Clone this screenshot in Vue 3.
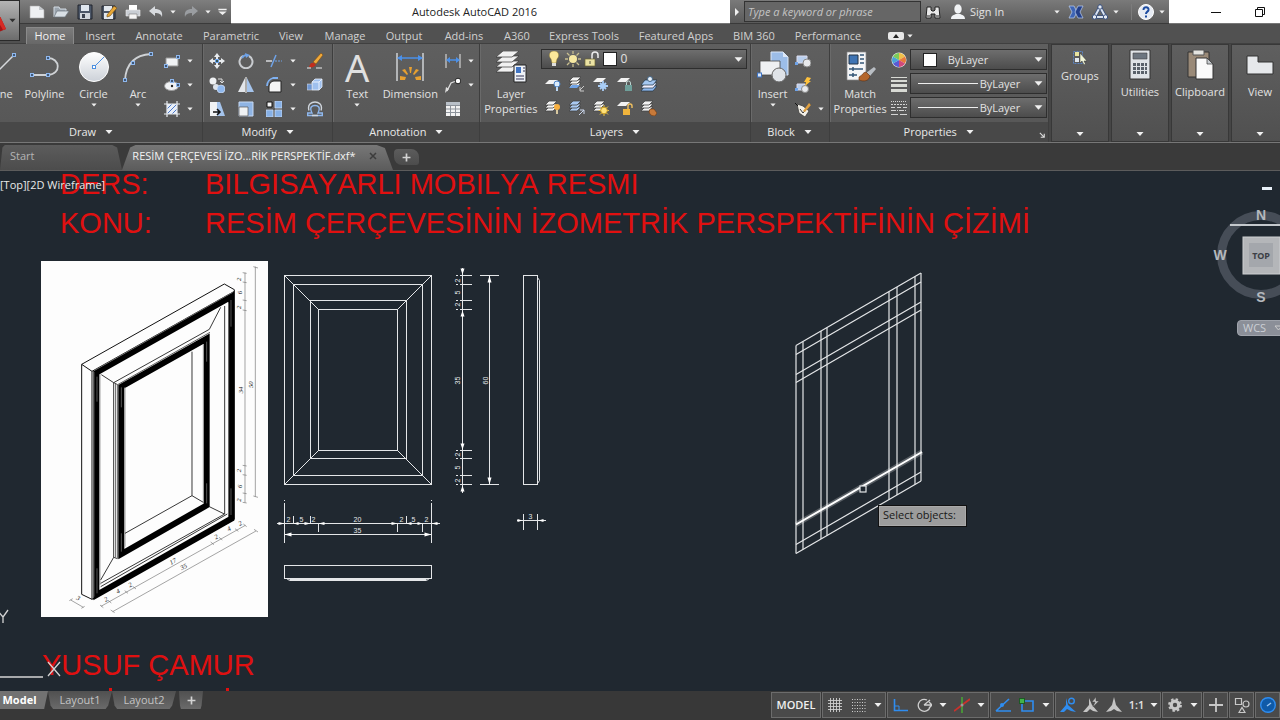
<script setup>
import { h } from 'vue'

const P = 'fill="none" stroke-linecap="round"'
const node = (x, y) => `<rect x="${x - 1.5}" y="${y - 1.5}" width="3" height="3" fill="#3f5878" stroke="#8fb8ee"/>`
const stack = (c = '#f2f2f2') =>
  [9, 6, 3].map((y) => `<path d="M4 ${y - 2}h8l-4 4h-8z" fill="${c}" stroke="#444" stroke-width=".8"/>`).join('')

const icons = {
  // quick access
  new: '<path d="M1 2h9l5 4v8H1z" fill="#eef0f2" stroke="#aaa" stroke-width=".6"/><path d="M10 2v4h5" fill="#c4c8cc"/>',
  open: '<path d="M1 13V3h5l1 2h6v2" fill="#9aa4ae" stroke="#d3dbe3"/><path d="M1 13l3-6h12l-4 6z" fill="#d9e0e6" stroke="#6b747d" stroke-width=".7"/>',
  save: '<path d="M1 1h14v14H1z" fill="#4c5768" stroke="#20252c"/><path d="M4 1h8v6H4z" fill="#dfe6ee"/><path d="M3 9h10v6H3z" fill="#d0d5db"/><path d="M5 10h3v4H5z" fill="#3c4350"/>',
  saveas: '<path d="M1 2h13v13H1z" fill="#4c5768" stroke="#20252c"/><path d="M3 2h8v5H3zM3 9h9v6H3z" fill="#e3e8ed"/><path d="M6 11l7-9 3 2-7 8-3 1z" fill="#e8a838" stroke="#6b4a14" stroke-width=".6"/>',
  print: '<path d="M4 1h8v5H4z" fill="#fff"/><path d="M1 6h14v6H1z" fill="#c9ced4" stroke="#eee" stroke-width=".6"/><path d="M4 10h8v5H4z" fill="#f5f5f5" stroke="#777" stroke-width=".6"/>',
  undo: '<path d="M1 7l6-5v3c5 0 8 2 7 8-1-3-3-4-7-4v3z" fill="#d7dade"/>',
  redo: '<path d="M15 7L9 2v3c-5 0-8 2-7 8 1-3 3-4 7-4v3z" fill="#9a9da1"/>',
  more: '<path d="M2 4h12v2H2zM2 8h12l-6 5z" fill="#f0f0f0"/>',
  down: '<path d="M1 4h14l-7 8z" fill="#f0f0f0"/>',
  right: '<path d="M4 0l8 8-8 8z" fill="#f0f0f0"/>',
  // info bar
  find: '<path d="M2 3h4v3l1 1h2l1-1V3h4l1 11h-5v-4H6v4H1z" fill="#e8e8e8" stroke="#222"/><path d="M2 12h3M11 12h3" stroke="#222"/>',
  user: '<ellipse cx="8" cy="5" rx="4" ry="5" fill="#f1f3f5" stroke="#555" stroke-width=".5"/><path d="M1 15c0-4 3-4 5-5h4c2 1 5 1 5 5z" fill="#f1f3f5"/>',
  exchange: '<path d="M1 2h5l3 6-3 6H1l3-6z" fill="#3e64b4" stroke="#bcd0f2" stroke-width=".7"/><path d="M15 2h-5L7 8l3 6h5l-3-6z" fill="#24408a" stroke="#bcd0f2" stroke-width=".7"/>',
  a360: '<path d="M8 3L2.500 13h11z" fill="none" stroke="#39507c" stroke-width="3.600"/><path d="M8 3L2.500 13h11z" fill="none" stroke="#d9e2f0" stroke-width="2"/><circle cx="8" cy="3" r="2.200" fill="#e7ecf4" stroke="#39507c"/><circle cx="2.500" cy="13" r="2.200" fill="#e7ecf4" stroke="#39507c"/><circle cx="13.500" cy="13" r="2.200" fill="#e7ecf4" stroke="#39507c"/>',
  help: '<circle cx="8" cy="8" r="7.500" fill="#e6ebf3" stroke="#fff"/><path d="M5.500 6c0-4 5.500-3.500 5 0-.3 1.800-2.500 1.600-2.500 4" fill="none" stroke="#1c4ba0" stroke-width="2"/><path d="M7 11.500h2v2H7z" fill="#1c4ba0"/>',
  min: '<path d="M3 8.500h10" stroke="#111"/>',
  restore: '<path d="M3.500 5.500h7v7h-7zM5.500 5V3.500h7v7H11" fill="none" stroke="#111"/>',
  logo: '<path d="M0 9L4 7l8 17-12 5z" fill="#a51414"/><path d="M0 9l4-2 8 17-3 1z" fill="#d62a24"/>',
  // draw
  line: `<path d="M4 28L28 4" ${P} stroke="#d6d9dc" stroke-width="1.500"/>${node(28, 4)}${node(4, 28)}`,
  polyline: `<path d="M3 24h16c14-1 12-17 0-17" ${P} stroke="#cfd2d5" stroke-width="1.800"/>${node(3, 24)}${node(19, 24)}${node(19, 7)}`,
  circle: `<defs><linearGradient id="cg" x2="0" y2="1"><stop stop-color="#fff"/><stop offset="1" stop-color="#ccd1d8"/></linearGradient></defs><circle cx="16" cy="16" r="14.500" fill="url(#cg)" stroke="#fff"/><path d="M16 16L26 6" stroke="#4b8fe0"/><rect x="14.500" y="14.500" width="3" height="3" fill="#fff" stroke="#4b8fe0"/>`,
  arc: `<path d="M3 29C4 14 12 4 29 3" ${P} stroke="#cfd2d5" stroke-width="1.800"/>${node(3, 29)}${node(11, 12)}${node(29, 3)}`,
  rect: `<path d="M2 5h12v8H2z" fill="#f0f2f4" stroke="#999"/>${node(2, 13)}${node(14, 4)}`,
  ellipse: `<ellipse cx="7.500" cy="9" rx="7" ry="4.500" fill="#f0f2f4" stroke="#999"/><circle cx="8" cy="9" r="1.200" fill="#222"/>${node(8, 4)}${node(14, 8)}`,
  hatch: '<path d="M3 3h10v10H3z" fill="#e8eef8"/><path d="M3 8l5-5M3 13L13 3M8 13l5-5" stroke="#4a78c8"/><path d="M3 0v16M13 0v16M0 3h16M0 13h16" stroke="#e8ecf0" stroke-width="1.200"/>',
  // modify
  move: '<path d="M8 0l3 4H9v3h3V5l4 3-4 3V9H9v3h2l-3 4-3-4h2V9H4v2L0 8l4-3v2h3V4H5z" fill="#e8ebee"/><rect x="6.500" y="6.500" width="3" height="3" fill="#355" stroke="#6fa3e8"/>',
  rotate: '<path d="M5 3a6.500 6.500 0 1 0 6 0" fill="none" stroke="#c9ccd0" stroke-width="2"/><path d="M4 5a6 6 0 0 1 4-3" fill="none" stroke="#6fa3e8" stroke-width="2"/><path d="M7 0l5 2-4 3z" fill="#6fa3e8"/>',
  trim: '<path d="M0 8h6" stroke="#d8dade" stroke-width="1.500"/><path d="M9 8h7" stroke="#6fa3e8" stroke-dasharray="2 1"/><path d="M5 14L10 2" stroke="#6fa3e8" stroke-width="1.500"/>',
  erase: '<path d="M6 9l8-9 2 2-7 9z" fill="#f0a93a" stroke="#7c4c12" stroke-width=".6"/><path d="M2 14c1-4 3-5 5-4l2 2c-2 2-4 3-7 2z" fill="#c22e1c"/><path d="M0 15h4M9 15h6" stroke="#eee"/>',
  copy: '<circle cx="4" cy="4" r="3.500" fill="#eef0f2"/><circle cx="7" cy="10" r="3" fill="#dde3ea"/><circle cx="12" cy="12" r="4" fill="#8fb8ee" stroke="#dde8f8" stroke-width=".6"/><path d="M9 2h4v3M11 4l2 2 2-2" fill="none" stroke="#ddd"/>',
  mirror: '<path d="M7 1v14H0z" fill="#e3e6ea"/><path d="M9 1v14h7z" fill="#a5c4ec"/><path d="M8 0v16" stroke="#fff"/>',
  fillet: '<path d="M3 15V10c0-3 2-6 5-6h7v11z" fill="#f4f4f4" stroke="#222"/><path d="M1 9c0-4 3-7 6-8h5" fill="none" stroke="#7fb0f0" stroke-width="1.800"/>',
  explode: '<path d="M5 5l3-3h7v8l-3 3H5z" fill="#9fc0ee" stroke="#e8f0fc" stroke-width=".8"/><path d="M5 5h7v8M12 5l3-3" fill="none" stroke="#e8f0fc"/><path d="M0 7h5v6H0z" fill="#6f98d4" stroke="#ddd" stroke-width=".6"/>',
  stretch: '<path d="M1 1h7v14H1z" fill="#f0f2f4"/><path d="M8 1h3l5 14H8z" fill="#a5c4ec"/><path d="M4 11h6M8 8l3 3-3 3" fill="none" stroke="#111" stroke-width="1.500"/>',
  scale: '<path d="M1 1h14v14H1z" fill="#8fb4e4" stroke="#c8daf4"/><path d="M1 6h9v9H1z" fill="#f0f2f4" stroke="#555" stroke-width=".7"/>',
  array: '<path d="M1 1h5v5H1z" fill="#f6f6f6" stroke="#111"/><path d="M9 0h7v7H9zM0 9h7v7H0zM9 9h7v7H9z" fill="#86b0e6" stroke="#c8daf4" stroke-width=".8"/>',
  offset: '<path d="M.700 14.500V12H5C2 6 5 4.500 8 4.500S14 6 11 12h4.300v2.500z" fill="none" stroke="#8fb8ee" stroke-width="1.400"/><path d="M2 9.500C0 3 5 1 8 1s8 2 6 8.500M5 14.500h6" fill="none" stroke="#d0d6dd" stroke-width="1.400"/>',
  // annotation
  dimension: '<path d="M3 2v28M29 2v28" stroke="#cfd2d5" stroke-width="1.500"/><path d="M4 7h24" stroke="#4b90e8" stroke-width="1.500"/><path d="M3 7l5-3v6zM29 7l-5-3v6z" fill="#4b90e8"/><g fill="#e8a030"><path d="M15 16h3l-1 6h-1zM8 19l3-1 3 5-1 1zM25 19l-3-1-3 5 1 1zM6 25l6 1-1 3H6zM27 25l-6 1 1 3h5z"/></g>',
  linear: '<path d="M1 1v14M15 1v14" stroke="#e8e8e8"/><path d="M2 7h12" stroke="#4b90e8" stroke-width="1.500"/><path d="M1 7l4-3v6zM15 7l-4-3v6z" fill="#4b90e8"/>',
  leader: '<path d="M2 14L6 6l5-2" fill="none" stroke="#ddd" stroke-width="1.300"/><path d="M0 16l1-6 3 2z" fill="#ddd"/><circle cx="13" cy="4" r="2.800" fill="#fff" stroke="#222"/>',
  table: '<path d="M1 1h14v14H1z" fill="#f2f2f2"/><path d="M1 4.500h14M1 8h14M1 11.500h14M5.500 4v11M10.500 4v11" stroke="#8c929a"/><path d="M1 1h14v3H1z" fill="#b9c0c8"/>',
  // layers
  layerprops: '<g fill="#f2f2f2" stroke="#383838" stroke-width=".7"><path d="M8 15h16l-7 6H1z"/><path d="M8 10h16l-7 6H1z"/><path d="M8 5h16l-7 6H1z"/><path d="M8 0h16l-7 6H1z"/></g><path d="M19 14h12v17H19z" fill="#eef2f8" stroke="#222"/><path d="M21 16h5v6h-5z" fill="#3f74c4"/><path d="M28 17h2M28 20h2M21 25h8M21 28h8" stroke="#335"/>',
  bulb: '<path d="M8 0C3 0 2 5 5 8l1 4h4l1-4c3-3 2-8-3-8z" fill="#fbe79a" stroke="#8f7a30" stroke-width=".5"/><path d="M6 12h4v3H6z" fill="#ddd"/>',
  sun: '<circle cx="8" cy="8" r="4" fill="#f7e9a2"/><path d="M8 0v3M8 13v3M0 8h3M13 8h3M2 2l2.500 2.500M11.500 11.500L14 14M14 2l-2.500 2.500M4.500 11.500L2 14" stroke="#c9bf90" stroke-width="1.300"/>',
  unlock: '<path d="M8 8V4a3 3 0 0 1 6 0v3" fill="none" stroke="#eee" stroke-width="1.500"/><path d="M1 8h10v7H1z" fill="#ece3a4" stroke="#6d6430" stroke-width=".7"/><path d="M6 10v3" stroke="#554"/>',
  l1: '<path d="M4 4h9l-4 4H0z" fill="#f2f2f2"/><circle cx="12" cy="8" r="3" fill="#dcecfb" stroke="#4b84c8"/><path d="M12 11v4" stroke="#bcd8f4" stroke-width="2"/>',
  l2: stack() + '<path d="M3 9h8l-3 3H0z" fill="#6fa3e8"/><path d="M15 10l-4 4M11 11v4h4" stroke="#ccc" fill="none"/>',
  l3: '<path d="M4 2h9l-4 4H0z" fill="#f2f2f2"/><path d="M10 5v10M5 10h10M7 7l6 6M13 7l-6 6" stroke="#a9cdf6" stroke-width="1.800"/>',
  l4: '<path d="M4 2h9l-4 4H0z" fill="#f2f2f2"/><path d="M8 9h7v6H8z" fill="#6f9f9a"/><path d="M9.500 9V7a2 2 0 0 1 4 0v2" fill="none" stroke="#bcd4d0"/>',
  l5: '<g stroke="#234" stroke-width=".7"><path d="M4 10h12l-4 5H0z" fill="#8fb8ee"/><path d="M4 7h12l-4 5H0z" fill="#eef"/><path d="M4 4h12l-4 5H0z" fill="#a5c8f2"/></g><circle cx="9" cy="3" r="2.500" fill="#e8f2fc" stroke="#468"/>',
  l6: stack() + '<circle cx="12" cy="7" r="3" fill="#f8b040"/><path d="M12 10v4" stroke="#d8c8a0" stroke-width="2"/>',
  l7: stack('#a9c8f0') + '<path d="M10 15l5-5M11 10h4v4" stroke="#ccd8ee" fill="none"/>',
  l8: stack() + '<path d="M11 5v11M5.500 10.500h11M7 6.500l8 8M15 6.500l-8 8" stroke="#e8c34a"/><circle cx="11" cy="10.500" r="3.300" fill="#ffe27a" stroke="#c89a20"/>',
  l9: '<path d="M4 2h9l-4 4H0z" fill="#f2f2f2"/><path d="M6 9h7v6H6z" fill="#f0b43c"/><path d="M11 9V6a2 2 0 0 1 4 0v2" fill="none" stroke="#f0c060" stroke-width="1.400"/>',
  l10: stack() + '<path d="M9 9h4l3 4-2 3c-3 0-5-1-6-4z" fill="#c87a3a" stroke="#6d3a14" stroke-width=".6"/>',
  // block
  insert: '<path d="M14 1h12l5 5v18H14z" fill="#9cbde8" stroke="#dce8f8"/><path d="M26 1v5h5" fill="#dce8f8"/><path d="M3 10h20v14H3z" fill="#eef0f3" stroke="#444" stroke-width=".8"/><circle cx="22" cy="24" r="7" fill="#dfe3e8" stroke="#666"/><rect x="0.500" y="22" width="4" height="4" fill="#dce8f8" stroke="#3f74c4"/>',
  b1: '<path d="M2 3h10v7H2z" fill="#b9cfee" stroke="#dde"/><circle cx="12" cy="10" r="4" fill="#e8eaed" stroke="#888"/><path d="M0 9h3v3H0z" fill="#6fa3e8"/>',
  b2: '<path d="M2 7h8v6H2z" fill="#b9cfee" stroke="#dde"/><circle cx="10" cy="12" r="3.500" fill="#e8eaed" stroke="#888"/><path d="M12 0l4 1-2 3h2l-6 5 1-4H9z" fill="#ffc23c"/><path d="M0 11h3v3H0z" fill="#6fa3e8"/>',
  b3: '<path d="M2 3l6 2 6 5-4 6-6-4z" fill="#f3f0e8" stroke="#333" stroke-width=".7"/><path d="M5 8l3 4 8-9" fill="none" stroke="#333"/><path d="M8 10l6-8 2 2-6 7z" fill="#dfa040"/><path d="M0 2l3 3" stroke="#111"/>',
  // properties
  match: '<path d="M3 1h19v28H3z" fill="#f4f5f7" stroke="#888" stroke-width=".7"/><path d="M5 4h9v9H5z" fill="#3f74b4" stroke="#234"/><path d="M16 4h4M16 8h4M16 12h4M5 18h14M5 24h8M9 16v4M9 22v4" stroke="#357" stroke-width="1.500"/><path d="M22 22l8-6 2 2-6 7z" fill="#b9bec4"/><path d="M15 26c3-1 4-5 7-5l4 4c-1 5-6 6-11 4z" fill="#b4662c" stroke="#5b2d10" stroke-width=".6"/>',
  wheel: '<circle cx="8" cy="8" r="7.500" fill="#eee"/><path d="M8 8V1a7 7 0 0 1 6 3.500z" fill="#f0c04a"/><path d="M8 8l6-3.500a7 7 0 0 1 0 7z" fill="#e87a3a"/><path d="M8 8l6 3.500A7 7 0 0 1 8 15z" fill="#d04a7a"/><path d="M8 8v7a7 7 0 0 1-6-3.500z" fill="#5a5ad4"/><path d="M8 8l-6 3.500a7 7 0 0 1 0-7z" fill="#4aa4d8"/><path d="M8 8L2 4.500A7 7 0 0 1 8 1z" fill="#7ccb5a"/>',
  weight: '<path d="M0 1h16v1H0zM0 4h16v2H0zM0 8h16v3H0zM0 13h16v3H0z" fill="#d8dad4"/>',
  ltype: '<g stroke="#d4d4d4"><path d="M0 1.500h16" stroke-dasharray="1 1"/><path d="M0 4.500h16" stroke-dasharray="2 1"/><path d="M0 7.500h16" stroke-dasharray="4 2"/><path d="M0 10.500h16" stroke-dasharray="5 1 1 1"/><path d="M0 14.500h16" stroke-dasharray="7 2"/></g>',
  launcher: '<path d="M2 2l9 9M12 4v8H4" stroke="#ddd" stroke-width="2.500" fill="none"/>',
  // collapsed panels
  group: '<path d="M1.500 2.500h9v12h-9z" fill="none" stroke="#5b84c4" stroke-dasharray="2 1"/><path d="M3 3h4v4H3z" fill="#e8e4a0"/><path d="M3 9h4v4H3z" fill="#dfe6ee"/><path d="M8 4v10l2-2 2 4 1.500-1-1.500-3h3z" fill="#f2f6d8" stroke="#333" stroke-width=".5"/>',
  calc: '<path d="M6 1h20v29H6z" fill="#dfe3e7" stroke="#333"/><path d="M9 4h14v6H9z" fill="#6d7680" stroke="#444" stroke-width=".6"/><g fill="#59616a"><path d="M9 14h3v3H9zM13 14h3v3h-3zM17 14h3v3h-3zM21 14h2v3h-2zM9 18h3v3H9zM13 18h3v3h-3zM17 18h3v3h-3zM21 18h2v3h-2zM9 22h3v3H9zM13 22h3v3h-3zM17 22h3v3h-3zM21 22h2v3h-2z"/></g>',
  clip: '<path d="M4 3h21v25H4z" fill="#9a8a78" stroke="#333"/><path d="M9 1h11v5H9z" fill="#e4e4e0" stroke="#555"/><path d="M12 9h11l6 6v15H12z" fill="#fafafa" stroke="#333"/><path d="M23 9v6h6z" fill="#c8ccd0" stroke="#333" stroke-width=".7"/>',
  view: '<path d="M3 7h11v6h15v12H3z" fill="#e6e8eb" stroke="#333"/>',
  pill: '<rect x="0" y="4" width="16" height="8" rx="2" fill="#e8e8e8"/><path d="M5 10h6L8 6z" fill="#222"/>',
  plus: '<path d="M8 1v14M1 8h14" stroke="#d4d4d4" stroke-width="3"/>',
  close: '<path d="M2 2l12 12M14 2L2 14" stroke="#3c3c3c" stroke-width="3"/>',
  // status bar
  grid: '<path d="M3.500 1v14M6.500 1v14M9.500 1v14M12.500 1v14M1 3.500h14M1 6.500h14M1 9.500h14M1 12.500h14" stroke="#cfcfcf" stroke-width=".9"/>',
  snap: '<path d="M1 2.500h15M1 5.500h15M1 8.500h15M1 11.500h15M1 14.500h15" stroke="#cfcfcf" stroke-dasharray="1 1.500"/>',
  ortho: '<path d="M2.500 2v11.500H16" fill="none" stroke="#2f8df0" stroke-width="1.600"/><path d="M3 9h4v4" fill="none" stroke="#2f8df0"/>',
  polar: '<path d="M14 10a6 6 0 1 1-3-7M8 8h8M8 8l6-5M13 5l3 3-3 3" fill="none" stroke="#cfcfcf" stroke-width="1.300"/>',
  iso: '<path d="M8 0v16" stroke="#4a9a38" stroke-width="1.800"/><path d="M0 14L16 2" stroke="#c8322c" stroke-width="1.800"/><circle cx="8" cy="8" r="1.500" fill="#999"/>',
  otrack: '<path d="M1 14L14 2M1 14h15" fill="none" stroke="#2f8df0" stroke-width="1.700"/><circle cx="7" cy="8" r="2" fill="#2f8df0"/>',
  osnap: '<path d="M3 4h11v10H3z" fill="none" stroke="#2f8df0" stroke-width="1.600"/><path d="M0 1h6v6H0z" fill="#1c5a24"/><path d="M1 2h4v4H1z" fill="#43b24a"/>',
  anno1: '<path d="M6 1l2 7 8 7-5-1-4-2-3 3-4 0 6-7z" fill="#2f8df0"/><circle cx="11.500" cy="4" r="2.800" fill="none" stroke="#2f8df0" stroke-width="1.400"/>',
  anno2: '<path d="M6 1l3 7 6 7-5-1-3-2-3 3H0l6-7z" fill="#c4c4c4"/><path d="M13 0l-4 5h3l-2 5 6-6h-3z" fill="#c4c4c4" stroke="#4a4a4a" stroke-width=".5"/>',
  anno3: '<path d="M8 0l2 8 6 7-5-1-3-2-3 2-5 1 6-7z" fill="#c4c4c4"/>',
  gear: '<circle cx="8" cy="8" r="3.800" fill="none" stroke="#c8c8c8" stroke-width="3.200"/><circle cx="8" cy="8" r="5.900" fill="none" stroke="#c8c8c8" stroke-width="2" stroke-dasharray="2.400 2.230"/>',
  cross: '<path d="M8 1v14M1 8h14" stroke="#c8c8c8" stroke-width="1.800"/>',
  isolate: '<path d="M1.500 1.500h6v6h-6zM5 15.500h6l-3-5z" fill="none" stroke="#c8c8c8" stroke-width="1.200"/><circle cx="12" cy="7" r="3" fill="none" stroke="#c8c8c8" stroke-width="1.200"/>',
  perf: '<circle cx="8" cy="8" r="7.300" fill="#0f5aa8" stroke="#2f8df0" stroke-width="1.400"/><path d="M7 9l4-3" stroke="#9cc8f4" stroke-width="1.400"/>',
}

const Ic = ({ n, s = 16, v = 16 }) =>
  h('svg', { width: s, height: s, viewBox: `0 0 ${v} ${v}`, innerHTML: icons[n], 'aria-hidden': 'true' })
Ic.props = ['n', 's', 'v']

const tabs = ['Home', 'Insert', 'Annotate', 'Parametric', 'View', 'Manage', 'Output', 'Add-ins', 'A360',
  'Express Tools', 'Featured Apps', 'BIM 360', 'Performance']
const files = [['new', 'New'], ['open', 'Open'], ['save', 'Save'], ['saveas', 'Save As'], ['print', 'Plot']]
const drawSmall = [['rect', 'Rectangle'], ['ellipse', 'Ellipse'], ['hatch', 'Hatch']]
const modify = [
  ['move', 'Move'], ['rotate', 'Rotate'], ['trim', 'Trim'], ['down', 'Trim options'], ['erase', 'Erase'],
  ['copy', 'Copy'], ['mirror', 'Mirror'], ['fillet', 'Fillet'], ['down', 'Fillet options'], ['explode', 'Explode'],
  ['stretch', 'Stretch'], ['scale', 'Scale'], ['array', 'Array'], ['down', 'Array options'], ['offset', 'Offset'],
]
const noteSmall = [['linear', 'Linear', true], ['leader', 'Leader', true], ['table', 'Table', false]]
const layerTools = ['Off', 'Isolate', 'Freeze', 'Lock', 'Make Current', 'Turn All On', 'Unisolate', 'Thaw All', 'Unlock', 'Match Layer']
const blockSmall = [['b1', 'Create', false], ['b2', 'Edit', false], ['b3', 'Edit Attributes', true]]
const side = [['group', 'Groups', 16], ['calc', 'Utilities', 32], ['clip', 'Clipboard', 32], ['view', 'View', 32]]
const status = [
  [['grid', 'Grid'], ['snap', 'Snap'], ['down', 'Snap settings']],
  [['ortho', 'Ortho'], ['polar', 'Polar tracking'], ['down', 'Polar settings'], ['iso', 'Isometric drafting'], ['down', 'Isoplane']],
  [['otrack', 'Object snap tracking'], ['osnap', 'Object snap'], ['down', 'Snap modes']],
  [['anno1', 'Annotation visibility'], ['anno2', 'Auto scale'], ['anno3', 'Annotation scale'], ['ratio', '1:1'], ['down', 'Scale list']],
  [['gear', 'Workspace'], ['down', 'Workspace list']],
  [['cross', 'Annotation monitor']],
  [['isolate', 'Isolate objects']],
  [['perf', 'Hardware acceleration']],
]

// front view: nested rectangles [left, top, right, bottom]
const rects = [[284, 275, 431, 484], [293, 284, 422, 475], [310, 300, 406, 458], [318, 309, 397, 450]]
const ticksY = [275, 284, 300, 309, 450, 458, 475, 484]
const dimsY = [['2', 280], ['5', 292], ['2', 304], ['35', 380], ['2', 454], ['5', 467], ['2', 480]]
const dimsX = [['2', 288], ['5', 301], ['2', 313], ['20', 357], ['2', 401], ['5', 413], ['2', 426]]
const isoX = [796, 803, 821, 827, 889, 897, 915, 921]
const isoTop = (x) => 345.5 - (x - 796) * 0.58
const isoLines = [0, 9, 29, 37, 199, 208]

// pictorial view: dimension labels [text, x, y, rotation]
const picDims = [
  ['2', 632, 88, -90], ['6', 636, 128, -90], ['2', 632, 172, -90], ['34', 638, 420, -90], ['50', 670, 404, -90],
  ['2', 632, 662, -90], ['6', 636, 709, -90], ['2', 632, 750, -90],
  ['2', 634, 826, -28], ['4', 600, 842, -28], ['2', 562, 866, -28], ['17', 432, 940, -28], ['35', 464, 956, -28],
  ['2', 304, 1010, -28], ['4', 267, 1030, -28], ['2', 231, 1054, -28], ['3', 142, 1050, 28],
]
</script>

<template>
  <div class="app">
    <header class="titlebar">
      <button class="appbtn" aria-label="Application menu"><Ic n="logo" :s="30" :v="30" /><Ic class="dark" n="down" :s="7" /></button>
      <div class="quick">
        <button v-for="f in files" :key="f[0]" class="q" :aria-label="f[1]"><Ic :n="f[0]" /></button>
        <button class="q undo" aria-label="Undo"><Ic n="undo" /></button>
        <button class="q slim" aria-label="Undo list"><Ic n="down" :s="6" /></button>
        <button class="q undo" aria-label="Redo"><Ic n="redo" /></button>
        <button class="q slim" aria-label="Redo list"><Ic n="down" :s="6" /></button>
        <button class="q slim" aria-label="Customize"><Ic n="more" :s="11" /></button>
      </div>
      <h1 class="title">Autodesk AutoCAD 2016</h1>
      <div class="info">
        <button class="q slim" aria-label="Expand search"><Ic n="right" :s="8" /></button>
        <input class="search" type="text" aria-label="Search" placeholder="Type a keyword or phrase">
        <button class="q" aria-label="Search help"><Ic n="find" /></button>
        <button class="signin"><Ic n="user" /><span>Sign In</span></button>
        <button class="q slim" aria-label="Account"><Ic n="down" :s="6" /></button>
        <button class="q" aria-label="Exchange Apps"><Ic n="exchange" /></button>
        <button class="q" aria-label="A360"><Ic n="a360" /></button>
        <button class="q tight" aria-label="A360 menu"><Ic n="down" :s="6" /></button>
        <button class="q help" aria-label="Help"><Ic n="help" /></button>
        <button class="q slim" aria-label="Help menu"><Ic n="down" :s="6" /></button>
      </div>
      <div class="win">
        <button aria-label="Minimize"><Ic n="min" /></button>
        <button aria-label="Restore"><Ic n="restore" /></button>
      </div>
    </header>

    <nav class="tabs" aria-label="Ribbon tabs">
      <button v-for="(t, i) in tabs" :key="t" :class="{ on: i === 0 }">{{ t }}</button>
      <button class="pill" aria-label="Minimize ribbon"><Ic n="pill" /><Ic n="down" :s="6" /></button>
    </nav>

    <section class="ribbon">
      <div class="panel draw">
        <div class="body">
          <button class="big w-line"><Ic n="line" :s="32" :v="32" /><span>Line</span></button>
          <button class="big w-poly"><Ic n="polyline" :s="32" :v="32" /><span>Polyline</span></button>
          <button class="big w-circle"><Ic n="circle" :s="32" :v="32" /><span>Circle</span><Ic n="down" :s="6" /></button>
          <button class="big w-arc"><Ic n="arc" :s="32" :v="32" /><span>Arc</span><Ic n="down" :s="6" /></button>
          <div class="stack">
            <button v-for="d in drawSmall" :key="d[0]" :aria-label="d[1]"><Ic :n="d[0]" /><Ic n="down" :s="6" /></button>
          </div>
        </div>
        <footer>Draw <Ic n="down" :s="8" /></footer>
      </div>

      <div class="panel modify">
        <div class="body">
          <div class="mgrid">
            <button v-for="m in modify" :key="m[1]" :aria-label="m[1]"><Ic :n="m[0]" :s="m[0] === 'down' ? 6 : 16" /></button>
          </div>
        </div>
        <footer>Modify <Ic n="down" :s="8" /></footer>
      </div>

      <div class="panel note">
        <div class="body">
          <button class="big w-text"><b class="glyph" aria-hidden="true">A</b><span>Text</span><Ic n="down" :s="6" /></button>
          <button class="big w-dim"><Ic n="dimension" :s="32" :v="32" /><span>Dimension</span></button>
          <div class="stack">
            <button v-for="d in noteSmall" :key="d[0]" :aria-label="d[1]"><Ic :n="d[0]" /><Ic v-if="d[2]" n="down" :s="6" /></button>
          </div>
        </div>
        <footer>Annotation <Ic n="down" :s="8" /></footer>
      </div>

      <div class="panel layers">
        <div class="body">
          <button class="big w-two"><Ic n="layerprops" :s="32" :v="32" /><span>Layer<br>Properties</span></button>
          <div class="layercol">
            <label class="combo">
              <Ic n="bulb" /><Ic n="sun" /><Ic n="unlock" /><i class="swatch"></i>
              <select aria-label="Layer"><option>0</option></select><Ic n="down" :s="9" />
            </label>
            <div class="lgrid">
              <button v-for="(l, i) in layerTools" :key="l" :aria-label="l"><Ic :n="'l' + (i + 1)" /></button>
            </div>
          </div>
        </div>
        <footer>Layers <Ic n="down" :s="8" /></footer>
      </div>

      <div class="panel block">
        <div class="body">
          <button class="big w-insert"><Ic n="insert" :s="32" :v="32" /><span>Insert</span><Ic n="down" :s="6" /></button>
          <div class="stack">
            <button v-for="d in blockSmall" :key="d[0]" :aria-label="d[1]"><Ic :n="d[0]" /><Ic v-if="d[2]" n="down" :s="6" /></button>
          </div>
        </div>
        <footer>Block <Ic n="down" :s="8" /></footer>
      </div>

      <div class="panel props">
        <div class="body">
          <button class="big w-two"><Ic n="match" :s="32" :v="32" /><span>Match<br>Properties</span></button>
          <div class="propcol">
            <div class="prow"><Ic n="wheel" />
              <label class="combo"><i class="swatch"></i><select aria-label="Color"><option>ByLayer</option></select><Ic n="down" :s="9" /></label>
            </div>
            <div class="prow"><Ic n="weight" />
              <label class="combo line"><i class="rule"></i><select aria-label="Lineweight"><option>ByLayer</option></select><Ic n="down" :s="9" /></label>
            </div>
            <div class="prow"><Ic n="ltype" />
              <label class="combo line"><i class="rule"></i><select aria-label="Linetype"><option>ByLayer</option></select><Ic n="down" :s="9" /></label>
            </div>
          </div>
        </div>
        <footer>Properties <Ic n="down" :s="8" /><button class="launch" aria-label="Properties palette"><Ic n="launcher" :s="7" /></button></footer>
      </div>

      <button v-for="s in side" :key="s[1]" class="mini" :class="{ small: s[2] === 16 }">
        <Ic :n="s[0]" :s="s[2]" :v="s[2]" /><span>{{ s[1] }}</span><Ic class="end" n="down" :s="8" />
      </button>
    </section>

    <nav class="files" aria-label="Drawings">
      <button class="ftab start"><span>Start</span></button>
      <button class="ftab current"><span>RESİM ÇERÇEVESİ İZO...RİK PERSPEKTİF.dxf*</span><Ic n="close" :s="8" /></button>
      <button class="ftab add" aria-label="New drawing"><Ic n="plus" :s="9" /></button>
    </nav>

    <main class="canvas">
      <svg class="drawing" width="1280" height="520" viewBox="0 171 1280 520" role="img" aria-label="Model space">
        <rect x="41" y="261" width="227" height="356" fill="#fdfdfd" />
        <!-- pictorial view -->
        <g transform="translate(30 250) scale(.33333)" fill="none" stroke="#111" stroke-width="3">
          <path d="M155 343L583 102L613 119V808L186 1048L155 1033ZM155 343L186 364L613 124M186 364V1048" />
          <path d="M199 368V1035L604 806V140Z" stroke="#000" stroke-width="18" />
          <path d="M192 366V1040M210 372V1005M596 160V795" stroke="#777" stroke-width="2" />
          <path d="M192 362L608 127" stroke="#888" stroke-width="2" />
          <path d="M214 374L251 398L538 238L572 172M251 398V922L212 990M251 922L263 926M538 770L583 792M584 168V792L212 1000M592 792L212 1010" stroke-width="2.500" />
          <path d="M257 400V922M263 404V924M251 398L263 404L540 247" stroke-width="2" />
          <path d="M274 410V912L530 766V266Z" stroke="#000" stroke-width="18" />
          <path d="M285 412V890M520 284V755" stroke="#999" stroke-width="3" />
          <path d="M486 305V737L285 850M486 737L520 757" stroke-width="2.500" />
          <path d="M201 380V455M201 955V1030M274 412V472M274 850V905M530 275V335M530 700V760M603 150V230M603 715V795" stroke="#555" stroke-width="3" />
          <g stroke="#777" stroke-width="2">
            <path d="M645 68V758M676 50V740M213 1069L646 826M248 1085L678 843M122 1050L160 1072" />
            <path d="M638 68l12 2M638 96l12 2M638 150l12 2M638 180l12 2M638 646l12 2M638 674l12 2M638 729l12 2M638 757l12 2M670 50l14 4M670 738l14 4M210 1065l10 8M234 1051l10 8M284 1022l10 8M308 1009l10 8M542 876l10 8M567 862l10 8M615 836l10 8M640 822l10 8M242 1080l12 8M672 838l12 8M118 1052l10-6M154 1075l10-6" />
          </g>
          <g class="picdim" fill="#222" stroke="none">
            <text v-for="(d, i) in picDims" :key="i" :transform="`translate(${d[1]} ${d[2]}) rotate(${d[3]})`">{{ d[0] }}</text>
          </g>
        </g>

        <!-- front, side and top views -->
        <g transform="translate(.5 .5)" fill="none" stroke="#e4e6e8">
          <g shape-rendering="crispEdges">
            <rect v-for="r in rects" :key="r[0]" :x="r[0]" :y="r[1]" :width="r[2] - r[0]" :height="r[3] - r[1]" />
            <path d="M462 267V492M489 275V484M479 275H498M479 484H498" />
            <path v-for="y in ticksY" :key="y" :d="`M455 ${y}h2M459 ${y}h12`" />
            <path d="M523 275H537V484H523ZM284 502V542M431 502V542M276 523H439M284 534H431M293 515V522M310 515V522M318 523V531M397 523V531M406 515V522M422 523V531M284 499v1M431 499v1" />
            <path d="M523 513V529M537 513V529M516 520H545M284 565H431V578H284Z" />
          </g>
          <path d="M284 275L318 309M431 275L397 309M284 484L318 450M431 484L397 450M537 277l2 3v200l-2 3M286 578l3 2H426l3-2M289 579H426" />
          <g fill="#fff" stroke="none">
            <path d="M284 523l-6-1.500v3zM431 523l6-1.500v3zM318 523l6-1.500v3zM397 523l-6-1.500v3zM310 523l-6-1.500v3zM293 523l5-1.500v3zM406 523l5-1.500v3zM422 523l-5-1.500v3zM284 534l7-2v4zM431 534l-7-2v4zM489 275l-2 7h4zM489 484l-2-7h4zM462 274l-2-6h4zM462 485l-2 6h4zM462 310l-2 6h4zM462 449l-2-6h4zM522 520l-5-1.500v3zM538 520l5-1.500v3z" />
          </g>
          <g class="dim" fill="#e4e6e8" stroke="none">
            <text v-for="d in dimsY" :key="d[1]" :transform="`translate(459 ${d[1]}) rotate(-90)`">{{ d[0] }}</text>
            <text transform="translate(487 380) rotate(-90)">60</text>
            <text v-for="d in dimsX" :key="d[1]" :x="d[1]" y="521">{{ d[0] }}</text>
            <text x="357" y="532">35</text>
            <text x="530" y="518">3</text>
          </g>
        </g>

        <!-- isometric construction lines -->
        <g fill="none" stroke="#e4e6e8" stroke-width="1.200">
          <path v-for="x in isoX" :key="x" :d="`M${x} ${isoTop(x)}V${isoTop(x) + 208}`" />
          <path v-for="o in isoLines" :key="o" :d="`M796 ${isoTop(796) + o}L921 ${isoTop(921) + o}`" />
          <path d="M796 524.500L922 452" stroke="#fff" stroke-opacity=".25" stroke-width="5" />
          <path d="M796 524.500L922 452" stroke="#fff" stroke-width="2" />
          <rect x="860" y="486" width="6" height="6" fill="#202830" />
        </g>
        <g class="red">
          <text x="60" y="194">DERS:</text>
          <text x="205" y="194">BILGISAYARLI MOBILYA RESMI</text>
          <text x="60" y="233">KONU:</text>
          <text x="205" y="233">RESİM ÇERÇEVESİNİN İZOMETRİK PERSPEKTİFİNİN ÇİZİMİ</text>
          <text x="42" y="675">YUSUF ÇAMUR</text>
          <path d="M109 688h3v3h-3zM226 688h3v3h-3z" />
        </g>
        <path d="M0 677H43M48 662l12 14M60 662L48 676M-2 611l5 6M8 610l-5 7v6" fill="none" stroke="#d4d4d4" stroke-width="1.300" />
      </svg>
      <div class="viewctl"><button>[Top]</button><button>[2D Wireframe]</button></div>
      <div class="prompt" role="tooltip">Select objects:</div>
      <div class="cube">
        <svg width="70" height="130" viewBox="1210 180 70 130" role="img" aria-label="View cube">
          <path d="M1262 188.500h10" stroke="#e8f0f8" stroke-width="3" />
          <circle cx="1261" cy="255" r="39.500" fill="none" stroke="#464d57" stroke-width="9" />
          <path d="M1230 225H1280" stroke="#c4c8cc" stroke-width="2" />
          <rect x="1243" y="237" width="37" height="37" fill="#b4b6b9" stroke="#cdcfd1" />
          <rect x="1249" y="243" width="24" height="24" fill="#a4a7ac" />
          <g class="compass" fill="#b4b8bd">
            <text x="1261" y="220">N</text><text x="1261" y="302">S</text><text x="1220" y="260">W</text>
          </g>
          <text class="top" x="1261" y="259">TOP</text>
        </svg>
        <button class="wcs">WCS <svg width="9" height="6" viewBox="0 0 9 6"><path d="M1 1h7l-3.500 4z" fill="none" stroke="#ccc" /></svg></button>
      </div>
    </main>

    <footer class="statusbar">
      <nav class="layouts" aria-label="Layouts">
        <button class="model">Model</button><button>Layout1</button><button>Layout2</button>
        <button class="add" aria-label="New layout"><Ic n="plus" :s="9" /></button>
      </nav>
      <div class="tools">
        <div class="sec"><button class="space">MODEL</button></div>
        <div v-for="(g, i) in status" :key="i" class="sec" :class="'s' + i">
          <button v-for="b in g" :key="b[1]" :class="{ arrow: b[0] === 'down', ratio: b[0] === 'ratio' }" :aria-label="b[1]">
            <template v-if="b[0] === 'ratio'">1:1</template>
            <Ic v-else :n="b[0]" :s="b[0] === 'down' ? 8 : 16" />
          </button>
        </div>
      </div>
    </footer>
  </div>
</template>

<style>
body { background: #202830; }
</style>

<style scoped>
.app {
  display: flex; flex-direction: column; min-height: 100vh; overflow: hidden;
  font: 11px/16px "Open Sans", "Noto Sans", sans-serif; color: #e2e2e2; background: #202830;
}
button, input, select { font: inherit; color: inherit; background: none; border: 0; padding: 0; margin: 0; }
button { display: flex; align-items: center; justify-content: center; white-space: nowrap; }
svg { display: block; flex: none; }

.titlebar { position: relative; display: flex; height: 24px; background: #fff; }
.appbtn {
  position: absolute; z-index: 2; left: 0; top: 0; width: 20px; height: 41px; overflow: hidden;
  background: linear-gradient(#b4b4b4, #6c6c6c); border: 1px solid #2a2a2a; border-left: 0;
}
.appbtn svg:first-child { position: absolute; left: -6px; top: 4px; }
.appbtn .dark { position: absolute; right: 3px; top: 16px; filter: brightness(.2); }
.quick {
  flex: 0 0 206px; display: flex; align-items: center; padding-left: 25px;
  background: linear-gradient(#7e7e7e, #5c5c5c); border-bottom: 1px solid #3a3a3a; box-sizing: content-box;
}
.q { width: 24px; height: 23px; flex: none; }
.q.undo { width: 21px; }
.q.slim { width: 14px; }
.q.tight { width: 8px; }
.title { flex: 1; margin: 0; padding-right: 12px; font-size: 11px; line-height: 23px; font-weight: 400; text-align: center; color: #222; border-bottom: 1px solid #777; }
.info {
  flex: 0 0 438px; display: flex; align-items: center; border-bottom: 1px solid #3a3a3a;
  background: linear-gradient(#7a7a7a, #5a5a5a);
}
.search { width: 168px; height: 19px; padding: 0 4px 0 3px; border: 1px solid #333; background: #666; font-size: 11px; font-style: italic; color: #ddd; }
.search::placeholder { color: #c4c4c4; opacity: 1; }
.signin { gap: 4px; width: 105px; justify-content: flex-start; padding-left: 5px; }
.help { margin-left: 11px; padding-left: 4px; border-left: 1px solid #7c7c7c; height: 16px; }
.win { flex: 0 0 111px; display: flex; align-items: center; justify-content: flex-end; gap: 28px; padding-right: 12px; box-sizing: border-box; border-bottom: 1px solid #777; }

.tabs {
  display: grid; height: 20px; padding-left: 26px; background: #515151;
  grid-template-columns: 48px 52px 66px 78px 42px 66px 52px 68px 38px 96px 88px 68px 80px 64px;
  box-shadow: inset 0 -1px #404040;
}
.tabs button { color: #d0d0d0; padding-bottom: 1px; }
.tabs button.on { color: #f2f2f2; margin-top: 3px; padding-bottom: 4px; background: linear-gradient(#7c7c7c, #626262); border: 1px solid #8a8a8a; border-bottom: 0; }
.tabs .pill { gap: 3px; }

.ribbon { display: flex; height: 98px; margin: 0 -9px 0 -20px; background: #464646; border-bottom: 1px solid #777; }
.panel { display: flex; flex-direction: column; box-sizing: border-box; border-right: 1px solid #3e3e3e; box-shadow: inset 1px 0 #6a6a6a; background: linear-gradient(#5f5f5f, #565656); min-width: 0; }
.draw { flex: 223 0 223px; } .modify { flex: 130 0 130px; } .note { flex: 147 0 147px; }
.layers { flex: 270 0 270px; } .block { flex: 79 0 79px; } .props { flex: 219 0 219px; }
.body { flex: 1; display: flex; align-items: flex-start; padding-top: 5px; overflow: hidden; }
.panel footer { position: relative; display: flex; align-items: center; justify-content: center; gap: 9px; height: 20px; padding-bottom: 1px; box-sizing: border-box; background: #484848; color: #e8e8e8; }
.big { flex-direction: column; line-height: 15px; flex: none; }
.big > svg:first-child { margin: 2px 0 3px; }
.big > svg:last-child { margin-top: 1px; }
.w-line { width: 24px; margin-left: 10px; } .w-poly { width: 61px; } .w-circle { width: 37px; } .w-arc { width: 52px; }
.w-text { width: 36px; margin-left: 6px; } .w-dim { width: 70px; } .w-two { width: 61px; } .w-insert { width: 44px; }
.glyph { font: 38px/37px "Noto Sans", sans-serif; height: 37px; color: #e0e0e0; }
.stack { display: flex; flex-direction: column; }
.stack button { height: 24px; gap: 7px; justify-content: flex-start; }
.mgrid { display: grid; grid-template-columns: 28px 29px 28px 10px 34px; grid-auto-rows: 24px; }
.layercol { flex: 1; min-width: 0; }
.combo { display: flex; align-items: center; gap: 3px; height: 20px; box-sizing: border-box; padding: 0 3px 0 4px; border: 1px solid #2e2e2e; background: linear-gradient(#6e6e6e, #4c4c4c); }
.combo select { flex: 1; min-width: 0; appearance: none; font-size: 12px; outline: 0; }
.swatch { width: 14px; height: 14px; background: #fff; border: 1px solid #222; box-sizing: border-box; }
.layercol .combo { margin: 0 3px 3px 0; }
.lgrid { display: grid; grid-template-columns: repeat(5, 24px); grid-auto-rows: 24px; }
.propcol { flex: 1; display: flex; flex-direction: column; gap: 3px; padding-right: 1px; min-width: 0; }
.prow { display: flex; align-items: center; gap: 3px; }
.prow .combo { flex: 1; height: 21px; min-width: 0; padding-left: 12px; gap: 11px; }
.prow .combo select { font-size: 11px; }
.prow .combo.line { padding-left: 7px; gap: 2px; }
.rule { width: 60px; height: 1px; background: #eee; }
.launch { position: absolute; right: 2px; bottom: 3px; }
.mini {
  flex: 58 0 58px; min-width: 0; flex-direction: column; justify-content: flex-start; align-self: stretch; box-sizing: border-box;
  margin-left: 2px; padding-top: 4px; border: 1px solid #383838; background: linear-gradient(#5f5f5f, #505050); overflow: hidden;
}
.mini > svg:first-child { margin-bottom: 3px; }
.mini .end { margin-top: auto; margin-bottom: 3px; }

.files { display: flex; align-items: flex-end; height: 24px; padding-top: 3px; background: #3a3a3a; border-bottom: 1px solid #5c5c5c; }
.ftab { box-sizing: border-box; height: 25px; padding: 0 10px 4px; background: linear-gradient(#5c5c5c, #4c4c4c); color: #b4b4b4; }
.start { width: 122px; justify-content: flex-start; clip-path: polygon(2% 10%, 4% 0, 92% 0, 96% 10%, 100% 100%, 0 100%); }
.current { width: 271px; gap: 13px; padding: 0 16px 4px 10px; color: #f2f2f2; background: linear-gradient(#777, #5c5c5c); clip-path: polygon(3% 10%, 5% 0, 94% 0, 97% 12%, 100% 100%, 0 100%); }
.ftab.add { width: 25px; height: 16px; padding: 0; margin: 0 0 5px 1px; border-radius: 4px 8px 3px 8px; }

.canvas { position: relative; flex: 1; min-height: 520px; overflow: hidden; background: #202830; }
.drawing { position: absolute; left: 0; top: 0; }
.red text { font: 29px "Liberation Sans", Arial, sans-serif; font-kerning: none; }
.red { fill: #e01010; }
.dim text { font: 7px "Liberation Sans", sans-serif; text-anchor: middle; }
.picdim text { font: italic 20px "Liberation Serif", serif; text-anchor: middle; }
.viewctl { position: absolute; left: 0; top: 6px; display: flex; color: #e8e8e8; }
.prompt { position: absolute; left: 878px; top: 334px; padding: 1px 10px 3px 4px; color: #181818; background: #9c9c9c; border: 1px solid #111; box-shadow: inset 0 0 0 1px #aaa; }
.cube { position: absolute; right: 0; top: 9px; width: 70px; }
.compass text { font: bold 14px "Liberation Sans", sans-serif; text-anchor: middle; }
.top { font: bold 9px "Noto Sans", sans-serif; text-anchor: middle; fill: #3c4046; }
.wcs { gap: 8px; margin: 10px -3px 0 27px; height: 16px; padding: 0 5px; border-radius: 4px; background: #8b8f98; border: 1px solid #a0a4ac; color: #ccd0d6; }

.statusbar { display: flex; justify-content: space-between; height: 29px; background: #383838; }
.layouts { display: flex; align-items: flex-start; }
.layouts button { height: 18px; width: 64px; color: #c4c4c4; background: linear-gradient(#505050, #6a6a6a); clip-path: polygon(0 0, 100% 0, 94% 80%, 90% 100%, 8% 100%, 4% 80%); }
.layouts .model { width: 48px; padding-right: 9px; font-weight: 700; color: #fff; background: #727272; clip-path: polygon(0 0, 100% 0, 92% 100%, 0 100%); box-sizing: border-box; }
.layouts .add { width: 24px; margin-left: 3px; }
.tools { display: flex; align-items: flex-start; gap: 1px; padding-top: 1px; }
.sec { display: flex; align-items: center; height: 26px; box-sizing: border-box; border: 1px solid #6c6c6c; background: #4a4a4a; }
.sec button { width: 24px; height: 24px; }
.sec button.arrow { width: 14px; }
.sec .space { width: 48px; font-weight: 600; color: #f0f0f0; }
.sec .ratio { font-weight: 600; }
.s3 button { width: 23px; }
.sec.s3 button.arrow { width: 12px; }
.sec.s3 button:not(.arrow) { width: 23px; }
.sec.s5 button, .sec.s6 button, .sec.s7 button { width: 23px; }
</style>
